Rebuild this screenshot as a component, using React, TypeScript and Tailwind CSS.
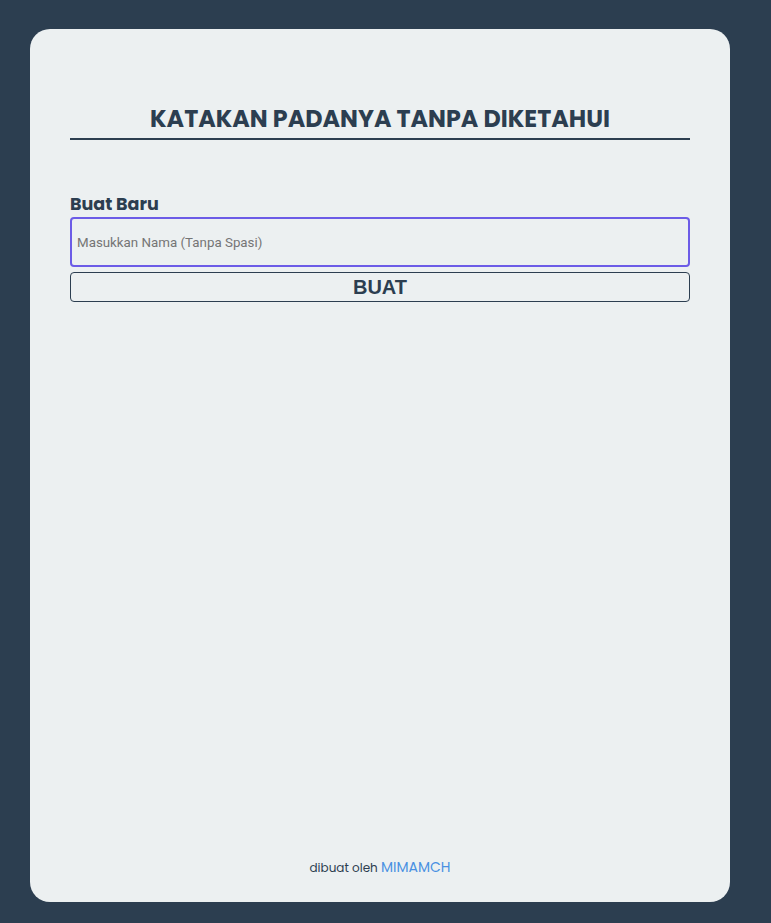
export default function App() {
  return (
    <div className="min-h-screen bg-[#2c3e50] px-[30px] pt-[29px] pb-[21px] [font-family:Poppins,Inter,sans-serif]">
      <div className="flex h-[873px] w-[700px] flex-col rounded-[20px] bg-[#ecf0f1] px-[40px]">
        <div className="mt-[75px] border-b-2 border-[#2c3e50] pb-[4px] text-center">
          <h1 className="text-[23.8px] font-bold leading-[30px] text-[#2c3e50]">KATAKAN PADANYA TANPA DIKETAHUI</h1>
        </div>

        <div className="mt-[52px]">
          <h2 className="text-[17.5px] font-bold leading-[24px] text-[#2c3e50]">Buat Baru</h2>
          <input
            type="text"
            placeholder="Masukkan Nama (Tanpa Spasi)"
            className="mt-[1px] block h-[50px] w-full rounded-[4px] border-2 border-[#6c5ce7] bg-transparent px-[5px] text-[13.333px] text-[#2c3e50] outline-none placeholder:text-[#757575] [font-family:Roboto,sans-serif]"
          />
          <button className="mt-[5px] block h-[30px] w-full rounded-[4px] border border-[#2c3e50] text-[20px] font-bold leading-[26px] text-[#2c3e50] [font-family:'Liberation_Sans',Arial,sans-serif]">
            BUAT
          </button>
        </div>

        <p className="mt-auto mb-[24px] text-center text-[12px] text-[#2c3e50]">
          dibuat oleh <a className="text-[14px] text-[#4a90e2]">MIMAMCH</a>
        </p>
      </div>
    </div>
  );
}
